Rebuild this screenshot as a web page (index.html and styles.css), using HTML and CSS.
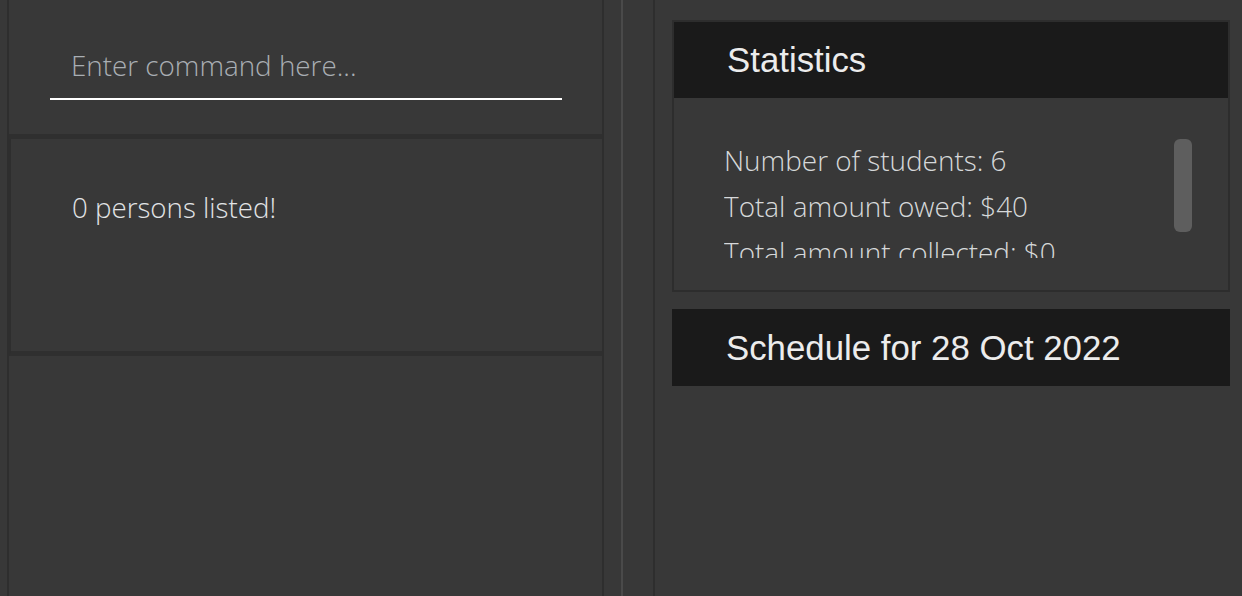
FILE: index.html
```html
<!DOCTYPE html>
<html>
<head>
<meta charset="utf-8">
<link rel="stylesheet" href="styles.css">
</head>
<body>
<div class="app">
  <div class="left">
    <div class="command-box">
      <div class="command-field">Enter command here...</div>
    </div>
    <div class="result-box">
      <div class="result-text">0 persons listed!</div>
    </div>
    <div class="list-panel"></div>
  </div>
  <div class="divider">
    <div class="divider-line"></div>
  </div>
  <div class="right">
    <div class="stats">
      <div class="panel-header">Statistics</div>
      <div class="stats-body">
        <div class="stats-scroll">
          <div class="stat-line">Number of students: 6</div>
          <div class="stat-line">Total amount owed: $40</div>
          <div class="stat-line">Total amount collected: $0</div>
        </div>
        <div class="scroll-thumb"></div>
      </div>
    </div>
    <div class="schedule">
      <div class="panel-header">Schedule for 28 Oct 2022</div>
    </div>
  </div>
</div>
</body>
</html>
```

FILE: styles.css
```css
html, body {
  margin: 0;
  padding: 0;
  background: #383838;
  height: 596px;
  overflow: hidden;
}

.app {
  display: flex;
  height: 596px;
}

.left {
  margin-left: 7px;
  width: 593px;
  border-left: 2px solid #2e2e2e;
  border-right: 2px solid #2e2e2e;
  display: flex;
  flex-direction: column;
}

.command-box {
  border-bottom: 5px solid #2f2f2f;
  box-sizing: border-box;
  height: 139px;
  padding: 40px 0 0 41px;
}

.command-field {
  width: 512px;
  height: 60px;
  box-sizing: border-box;
  border-bottom: 2px solid #ffffff;
  padding-left: 21px;
  font-family: "Open Sans", sans-serif;
  font-weight: 300;
  font-size: 27.8px;
  line-height: 51px;
  color: #a9aeb3;
  white-space: nowrap;
}

.result-box {
  height: 217px;
  box-sizing: border-box;
  border-left: 2px solid #2e2e2e;
  border-bottom: 5px solid #2f2f2f;
  padding: 48px 0 0 61px;
}

.result-text {
  font-family: "Open Sans", sans-serif;
  font-weight: 300;
  font-size: 27.7px;
  line-height: 40px;
  color: #e2e4e6;
}

.list-panel {
  flex: 1;
}

.divider {
  width: 51px;
  display: flex;
  padding-left: 17px;
  box-sizing: border-box;
  border-right: 2px solid #2e2e2e;
}

.divider-line {
  width: 2px;
  background: #4a4a4a;
}

.right {
  flex: 1;
  padding: 20px 12px 0 17px;
  display: flex;
  flex-direction: column;
  gap: 17px;
}

.stats {
  border: 2px solid #2d2d2d;
  height: 272px;
  box-sizing: border-box;
  display: flex;
  flex-direction: column;
}

.panel-header {
  background: #1a1a1a;
  height: 76px;
  display: flex;
  align-items: center;
  padding-left: 53px;
  font-family: "Liberation Sans", Arial, sans-serif;
  font-size: 34.8px;
  color: #ececec;
  white-space: nowrap;
}

.schedule .panel-header {
  height: 77px;
  padding-left: 54px;
}

.stats-body {
  flex: 1;
  position: relative;
  padding: 39px 0 0 50px;
}

.stats-scroll {
  height: 121px;
  overflow: hidden;
}

.stat-line {
  font-family: "Open Sans", sans-serif;
  font-weight: 300;
  font-size: 27.9px;
  line-height: 46px;
  color: #d6d8da;
  white-space: nowrap;
}

.scroll-thumb {
  position: absolute;
  top: 41px;
  right: 36px;
  width: 18px;
  height: 93px;
  border-radius: 6px;
  background: #5e5e5e;
}
```
